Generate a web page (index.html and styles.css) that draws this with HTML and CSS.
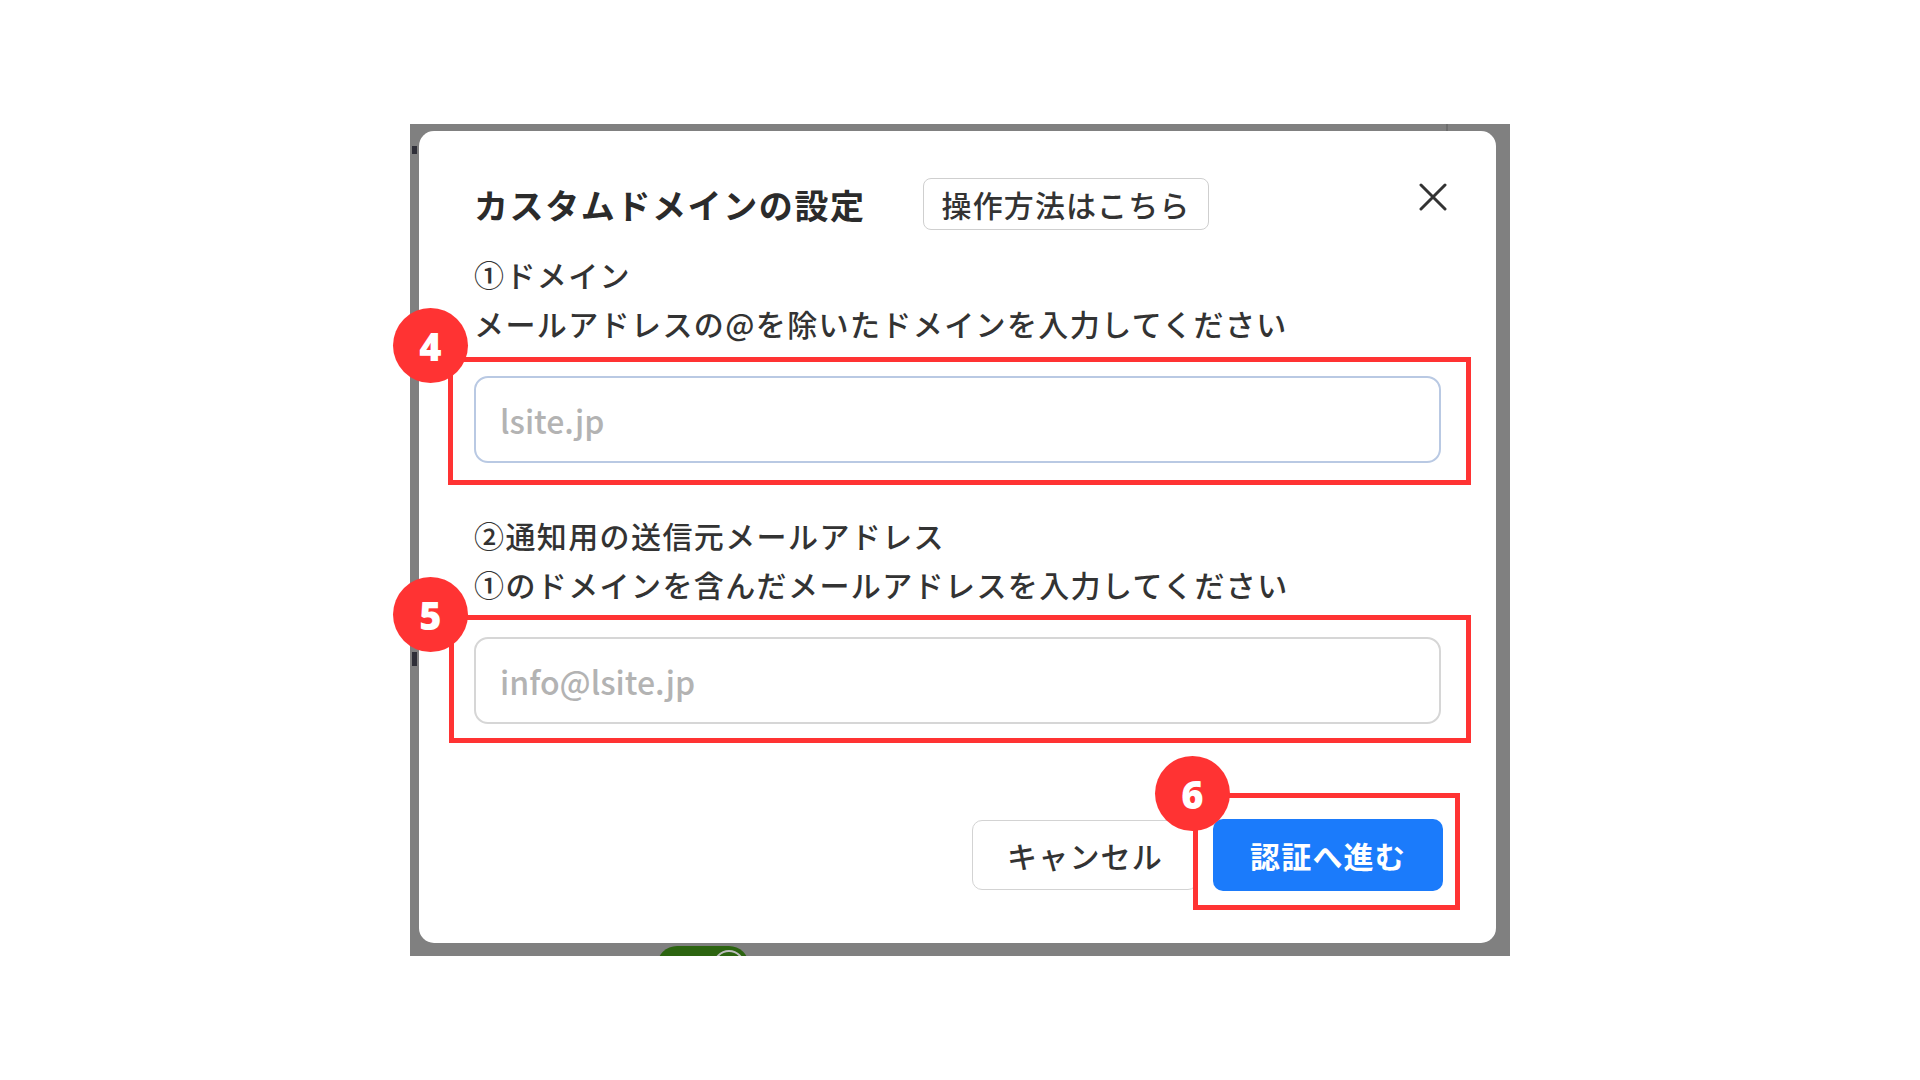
FILE: index.html
```html
<!DOCTYPE html>
<html lang="ja">
<head>
    <meta charset="UTF-8">
    <title>カスタムドメインの設定</title>
    <meta name="viewport" content="width=device-width, initial-scale=1">
    <link rel="stylesheet" href="styles.css">
</head>
<body>
    <div class="shot">
        <!-- bits of the page under the overlay -->
        <span class="under-mark under-a"></span>
        <span class="under-mark under-b"></span>
        <span class="under-line"></span>
        <span class="under-toggle"><span class="knob"></span></span>

        <div class="modal">
            <div class="modal-head">
                <h2 class="modal-title">カスタムドメインの設定</h2>
                <button class="help-btn">操作方法はこちら</button>
                <button class="close-btn" aria-label="閉じる">
                    <svg width="28" height="28" viewBox="0 0 28 28">
                        <path d="M2 2 L26 26 M26 2 L2 26" stroke="#333" stroke-width="3" stroke-linecap="round" fill="none"/>
                    </svg>
                </button>
            </div>

            <div class="field field-first">
                <p class="label">①ドメイン</p>
                <p class="label">メールアドレスの@を除いたドメインを入力してください</p>
                <div class="input-wrap">
                    <input class="text-input focused" type="text" placeholder="lsite.jp">
                    <span class="mark mark-domain"><span class="badge badge-domain">4</span></span>
                </div>
            </div>

            <div class="field field-second">
                <p class="label">②通知用の送信元メールアドレス</p>
                <p class="label">①のドメインを含んだメールアドレスを入力してください</p>
                <div class="input-wrap">
                    <input class="text-input" type="text" placeholder="info@lsite.jp">
                    <span class="mark mark-mail"><span class="badge badge-mail">5</span></span>
                </div>
            </div>

            <div class="actions">
                <button class="btn btn-cancel">キャンセル</button>
                <div class="submit-wrap">
                    <button class="btn btn-submit">認証へ進む</button>
                    <span class="mark mark-submit"><span class="badge badge-submit">6</span></span>
                </div>
            </div>
        </div>
    </div>
</body>
</html>
```

FILE: styles.css
```css
body { margin: 0; background: #fff; font-family: "Noto Sans CJK JP", "Noto Sans", sans-serif; color: #333; }
.shot { position: relative; width: 1100px; height: 832px; margin: 124px 0 0 410px; padding: 7px 14px 13px 9px; box-sizing: border-box; background: #808080; }
.under-mark { position: absolute; left: 2px; width: 5px; background: #2f2f38; }
.under-a { top: 22px; height: 8px; }
.under-b { top: 528px; height: 14px; }
.under-line { position: absolute; top: 0; left: 1036px; width: 2px; height: 7px; background: #6e6e6e; }
.under-toggle { position: absolute; left: 247px; top: 822px; width: 92px; height: 40px; border-radius: 20px; background: #2c6410; }
.under-toggle .knob { position: absolute; right: 4px; top: 4px; width: 32px; height: 32px; border-radius: 50%; border: 2px solid #bfbfbf; box-sizing: border-box; }

.modal { position: relative; z-index: 1; height: 100%; box-sizing: border-box; background: #fff; border-radius: 15px; padding: 47px 55px 53px; }
.modal-head { display: flex; align-items: center; height: 52px; }
.modal-title { margin: 0; font-size: 34px; font-weight: 700; letter-spacing: 1.6px; color: #2b2b2b; }
.help-btn { margin-left: 57px; height: 52px; padding: 0 18px; background: #fff; border: 1.5px solid #cfcfcf; border-radius: 8px; font-family: inherit; font-size: 30px; font-weight: 500; letter-spacing: 1.1px; color: #333; }
.close-btn { margin: -14px -6px 0 auto; padding: 0; width: 28px; height: 28px; background: none; border: none; cursor: pointer; }

.field-first { margin-top: 20px; }
.field-second { margin-top: 48px; }
.label { margin: 0; font-size: 30px; font-weight: 500; line-height: 49px; letter-spacing: 1.4px; color: #333; }
.input-wrap { position: relative; margin-top: 28px; }
.text-input { display: block; width: 100%; height: 87px; box-sizing: border-box; padding: 0 24px; border: 2px solid #d6d6d6; border-radius: 14px; font-family: inherit; font-size: 32px; font-weight: 500; color: #333; background: #fff; }
.text-input.focused { border-color: #b9c9e3; }
.text-input::placeholder { color: #b3b3b3; }

.mark { position: absolute; border: 5px solid #ff3333; pointer-events: none; z-index: 2; }
.mark-domain { top: -19px; left: -26px; right: -30px; bottom: -22px; }
.mark-mail { top: -22px; left: -25px; right: -30px; bottom: -19px; }
.mark-submit { top: -26px; left: -20px; right: -17px; bottom: -19px; }
.badge { position: absolute; width: 75px; height: 75px; border-radius: 50%; background: #ff3333; color: #fff; display: flex; align-items: center; justify-content: center; font-family: "Open Sans", sans-serif; font-weight: 800; font-size: 38px; }
.badge-domain { left: -60px; top: -54px; }
.badge-mail { left: -61px; top: -43px; }
.badge-submit { left: -43px; top: -42px; }

.actions { display: flex; justify-content: flex-end; align-items: center; gap: 15px; margin: 95px -2px 0 0; height: 72px; }
.btn { font-family: inherit; font-size: 30px; letter-spacing: 1.2px; border-radius: 10px; cursor: pointer; }
.btn-cancel { width: 226px; height: 70px; background: #fff; border: 1.5px solid #d3d3d3; color: #333; font-weight: 500; }
.submit-wrap { position: relative; }
.btn-submit { display: block; width: 230px; height: 72px; background: #1b7bfb; border: none; color: #fff; font-weight: 700; }
```
